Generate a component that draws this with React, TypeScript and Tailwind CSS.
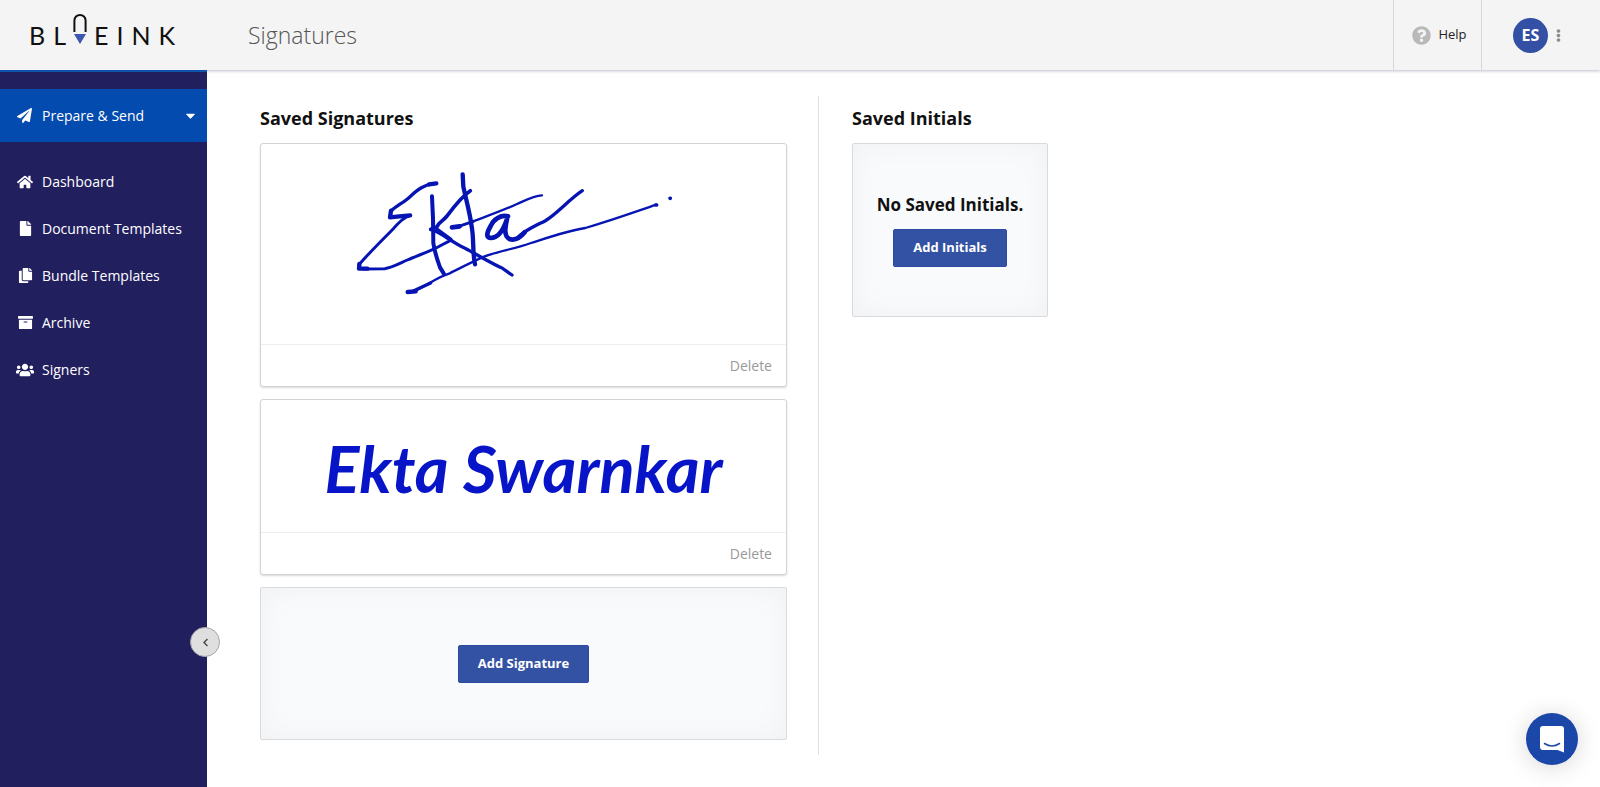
import type { ReactNode } from "react";
import type { IconType } from "react-icons";
import {
  FaArchive,
  FaCaretDown,
  FaChevronLeft,
  FaCopy,
  FaEllipsisV,
  FaFile,
  FaHome,
  FaPaperPlane,
  FaQuestionCircle,
  FaUsers,
} from "react-icons/fa";

const navItems: { label: string; icon: IconType; size: string }[] = [
  { label: "Dashboard", icon: FaHome, size: "size-4" },
  { label: "Document Templates", icon: FaFile, size: "size-[15px]" },
  { label: "Bundle Templates", icon: FaCopy, size: "size-[15px]" },
  { label: "Archive", icon: FaArchive, size: "size-[15px]" },
  { label: "Signers", icon: FaUsers, size: "size-[18px]" },
];

function Logo() {
  return (
    <a
      href="#home"
      aria-label="Blueink"
      className="flex w-[207px] shrink-0 items-center gap-2 pl-[29px] font-['Lato',sans-serif] text-[25px] leading-none text-[#111]"
    >
      <span>B</span>
      <span>L</span>
      <svg viewBox="0 0 14 32" className="mb-3 h-8 w-[14px] -mx-px shrink-0" aria-hidden="true">
        <path d="M1.400 19V7.500a5.600 5.600 0 0 1 11.200 0V19" fill="none" stroke="#111" strokeWidth="2" />
        <path d="M1 21h12L7 31z" fill="#3c57b0" />
      </svg>
      <span>E</span>
      <span>I</span>
      <span>N</span>
      <span>K</span>
    </a>
  );
}

function Header() {
  return (
    <header className="relative z-10 flex h-[70px] bg-[#f4f4f4] shadow-[0_1px_3px_rgba(40,40,90,0.3)]">
      <Logo />
      <h1 className="flex flex-1 items-center pl-[41px] text-[23px] font-light text-[#555]">Signatures</h1>
      <a href="#help" className="flex w-[88px] items-center justify-center gap-[7px] border-l border-[#d8d8dc] pl-1 text-[13px] text-[#222]">
        <FaQuestionCircle className="size-[19px] text-[#b9b9b9]" />
        Help
      </a>
      <button
        type="button"
        aria-label="Account menu"
        className="flex w-[119px] items-center gap-1 border-l border-[#d8d8dc] pl-[31px]"
      >
        <span className="flex size-[35px] items-center justify-center rounded-full bg-[#3450a4] text-base font-bold text-white">
          ES
        </span>
        <FaEllipsisV className="size-[13px] text-[#8c8c8c]" />
      </button>
    </header>
  );
}

function Sidebar() {
  return (
    <aside className="relative w-[207px] shrink-0 border-t-2 border-[#0b5cb8] bg-[#221f5f] pt-[17px] text-sm text-white">
      <button type="button" className="flex h-[53px] w-full items-center bg-[#034bae] pr-[9px] pl-[17px]">
        <FaPaperPlane className="size-[15px]" />
        <span className="flex-1 pl-[10px] text-left">Prepare &amp; Send</span>
        <FaCaretDown className="size-[15px]" />
      </button>
      <nav className="flex flex-col pt-4">
        {navItems.map(({ label, icon: Icon, size }) => (
          <a key={label} href="#nav" className="flex h-[47px] items-center gap-2 pl-4">
            <span className="flex w-[18px] justify-center">
              <Icon className={size} />
            </span>
            {label}
          </a>
        ))}
      </nav>
      <button
        type="button"
        aria-label="Collapse sidebar"
        className="absolute -right-[13px] bottom-[130px] z-20 flex size-[30px] items-center justify-center rounded-full border border-[#a5a5aa] bg-[#dfdfe0] text-[#444]"
      >
        <FaChevronLeft className="size-[9px]" />
      </button>
    </aside>
  );
}

function SignatureCard({ children }: { children: ReactNode }) {
  return (
    <article className="rounded-[3px] border border-[#d2d4d8] bg-white shadow-[0_1px_2px_rgba(0,0,0,0.15)]">
      {children}
      <footer className="flex h-[42px] items-center justify-end border-t border-[#eeeeee] pr-[14px]">
        <button type="button" className="text-sm text-[#999]">
          Delete
        </button>
      </footer>
    </article>
  );
}

function DrawnSignature() {
  return (
    <svg
      viewBox="0 -18 1164 600"
      role="img"
      aria-label="Handwritten signature"
      className="mx-auto block h-[200px] w-[388px]"
      fill="none"
      stroke="#0714b4"
      strokeLinecap="round"
      strokeLinejoin="round"
    >
      <path d="M319 100L297 103" strokeWidth="13" />
      <path d="M310 101C280 106 264 118 240 140C223 156 196 170 182 184" strokeWidth="10" />
      <path d="M183 182L180 202L208 199L240 196" strokeWidth="13" />
      <path d="M242 196C218 204 208 217 190 236C153 274 115 311 87 344" strokeWidth="9" />
      <path d="M88 342L87 356L112 356" strokeWidth="13" />
      <path d="M100 357L164 356C184 354 207 341 232 330C268 314 305 303 335 285L362 271" strokeWidth="9" />
      <path d="M306 139L309 205L310 280C314 308 322 329 330 352L341 370" strokeWidth="12" />
      <path d="M421 122C393 141 371 171 351 198C339 213 325 218 322 229L302 238" strokeWidth="11" />
      <path d="M302 238C335 246 365 278 405 295C445 316 492 344 516 354L546 375" strokeWidth="10" />
      <path d="M322 240L362 269" strokeWidth="13" />
      <path d="M398 73L400 110C409 152 420 190 425 230C432 263 427 307 435 343" strokeWidth="13" />
      <path d="M366 232L389 229" strokeWidth="14" />
      <path d="M386 229L430 214" strokeWidth="9" />
      <path d="M430 214C482 194 522 180 561 162C588 150 611 137 636 136" strokeWidth="7" />
      <path d="M534 199C513 193 490 208 482 228C470 249 467 262 482 264C507 264 522 235 531 207C525 235 521 257 538 267C556 273 571 263 584 247" strokeWidth="14" />
      <path d="M561 266C575 246 609 231 645 213C684 189 714 151 757 122" strokeWidth="10" />
      <path d="M233 426L257 424" strokeWidth="13" />
      <path d="M250 424C292 407 319 382 359 370C397 351 430 334 462 320C505 303 554 297 603 279C662 260 715 242 766 234C848 210 908 188 979 164" strokeWidth="7" />
      <path d="M250 423L302 399" strokeWidth="10" />
      <path d="M977 165h3M1020 145h1" strokeWidth="11" />
    </svg>
  );
}

function PrimaryButton({ children }: { children: ReactNode }) {
  return (
    <button
      type="button"
      className="h-[38px] rounded-[2px] border border-[#2c4aa0] bg-[#3452a4] px-[19px] text-[13px] font-bold text-white"
    >
      {children}
    </button>
  );
}

export default function App() {
  return (
    <div className="flex min-h-screen flex-col bg-white font-['Open_Sans',sans-serif] text-black">
      <Header />
      <div className="flex flex-1">
        <Sidebar />
        <main className="grid flex-1 grid-cols-[612fr_781fr] pt-[26px] pb-8">
          <section className="border-r border-[#dfe0e3] pr-[31px] pl-[53px]">
            <h2 className="pt-2 text-lg leading-7 font-bold text-[#111]">Saved Signatures</h2>
            <div className="mt-[11px] flex flex-col gap-3">
              <SignatureCard>
                <DrawnSignature />
              </SignatureCard>
              <SignatureCard>
                <p className="flex h-[132px] items-center justify-center pt-1 font-['Lato',cursive] text-[65px] leading-none font-bold text-[#0714c8] italic">
                  Ekta Swarnkar
                </p>
              </SignatureCard>
              <div className="flex h-[153px] items-center justify-center rounded-[2px] border border-[#d8dadd] bg-[#f9fafc] shadow-[inset_0_0_30px_rgba(0,0,0,0.04)]">
                <PrimaryButton>Add Signature</PrimaryButton>
              </div>
            </div>
          </section>
          <section className="pl-[33px]">
            <h2 className="pt-2 text-lg leading-7 font-bold text-[#111]">Saved Initials</h2>
            <div className="mt-[11px] flex h-[174px] w-[196px] flex-col items-center justify-center gap-3 rounded-[2px] border border-[#d8dadd] bg-[#f9fafc] shadow-[inset_0_0_30px_rgba(0,0,0,0.04)]">
              <p className="text-[17px] leading-6 font-bold text-[#111]">No Saved Initials.</p>
              <PrimaryButton>Add Initials</PrimaryButton>
            </div>
          </section>
        </main>
      </div>
      <button
        type="button"
        aria-label="Open chat"
        className="fixed right-[22px] bottom-[22px] flex size-[52px] items-center justify-center rounded-full bg-[#1b48a8] shadow-[0_2px_24px_rgba(0,0,0,0.16)]"
      >
        <svg viewBox="0 0 24 27" className="h-[27px] w-6" aria-hidden="true">
          <path d="M3 0h18a3 3 0 0 1 3 3v23.500L17.500 24H3a3 3 0 0 1-3-3V3a3 3 0 0 1 3-3z" fill="#fff" />
          <path d="M4.500 17.500q7.500 4.800 15 0" fill="none" stroke="#1b48a8" strokeWidth="1.500" strokeLinecap="round" />
        </svg>
      </button>
    </div>
  );
}
